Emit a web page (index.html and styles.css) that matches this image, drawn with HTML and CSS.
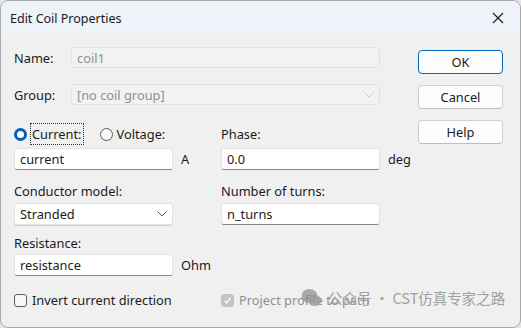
FILE: index.html
```html
<!DOCTYPE html>
<html>
<head>
    <meta charset="utf-8">
    <title>Edit Coil Properties</title>
    <link rel="stylesheet" href="styles.css">
</head>
<body>
    <div class="window">
        <div class="titlebar">
            <span class="title">Edit Coil Properties</span>
            <svg class="close" width="12" height="12" viewBox="0 0 12 12">
                <path d="M1 1 L11 11 M11 1 L1 11" stroke="#1a1a1a" stroke-width="1.1" fill="none"/>
            </svg>
        </div>

        <div class="content">
            <div class="form">
                <div class="row-wide row-name">
                    <span class="label">Name:</span>
                    <div class="field disabled">coil1</div>
                </div>
                <div class="row-wide row-group">
                    <span class="label">Group:</span>
                    <div class="field disabled combo">
                        [no coil group]
                        <svg class="chev" width="10" height="6" viewBox="0 0 10 6"><path d="M0.5 0.5 L5 5 L9.5 0.5" stroke="#c8c8c8" fill="none"/></svg>
                    </div>
                </div>

                <div class="row row-radio">
                    <div class="radios">
                        <span class="radio on"></span>
                        <span class="focus">Current:</span>
                        <span class="radio"></span>
                        <span>Voltage:</span>
                    </div>
                    <span></span>
                    <span>Phase:</span>
                </div>
                <div class="row row-input">
                    <div class="field">current</div>
                    <span class="unit">A</span>
                    <div class="field">0.0</div>
                    <span class="unit">deg</span>
                </div>

                <div class="row row-label">
                    <span>Conductor model:</span>
                    <span></span>
                    <span>Number of turns:</span>
                </div>
                <div class="row row-input2">
                    <div class="field combo plain">
                        Stranded
                        <svg class="chev" width="10" height="6" viewBox="0 0 10 6"><path d="M0.5 0.5 L5 5 L9.5 0.5" stroke="#5a5a5a" fill="none"/></svg>
                    </div>
                    <span></span>
                    <div class="field">n_turns</div>
                </div>

                <div class="row row-label2">
                    <span>Resistance:</span>
                </div>
                <div class="row row-input3">
                    <div class="field">resistance</div>
                    <span class="unit">Ohm</span>
                </div>

                <div class="row row-check">
                    <div class="check-item">
                        <span class="checkbox"></span>
                        <span>Invert current direction</span>
                    </div>
                    <span></span>
                    <div class="check-item grey">
                        <span class="checkbox checked">
                            <svg width="9" height="9" viewBox="0 0 9 9"><path d="M1.5 4.8 L3.6 6.8 L7.6 2" stroke="#fff" stroke-width="1.3" fill="none"/></svg>
                        </span>
                        <span>Project profile to path</span>
                    </div>
                </div>
            </div>

            <div class="buttons">
                <div class="btn default">OK</div>
                <div class="btn">Cancel</div>
                <div class="btn">Help</div>
            </div>
        </div>

        <div class="watermark">
            <svg width="22" height="20" viewBox="0 0 22 20">
                <ellipse cx="8.5" cy="8" rx="8" ry="7" fill="#8e8e8e" opacity="0.75"/>
                <ellipse cx="14" cy="12.5" rx="6.5" ry="5.5" fill="#9a9a9a" opacity="0.75"/>
            </svg>
            <span>公众号 · CST仿真专家之路</span>
        </div>
    </div>
</body>
</html>
```

FILE: styles.css
```css
html {
    background: #e6e6e6;
}

body {
    margin: 0;
    font-family: "Noto Sans", "Liberation Sans", sans-serif;
    font-size: 12.8px;
    color: #1b1b1b;
}

.window {
    position: relative;
    width: 519px;
    height: 326px;
    border: 1px solid #a9a9a9;
    border-radius: 8px;
    background: #f0f0f0;
    overflow: hidden;
}

.titlebar {
    height: 34px;
    background: #eef2f9;
    display: flex;
    align-items: center;
    justify-content: space-between;
    padding: 0 16px 0 9px;
}

.title {
    font-size: 12.5px;
}

.content {
    display: flex;
    padding-left: 13px;
}

.form {
    width: 366px;
}

.row-wide {
    display: grid;
    grid-template-columns: 57px 309px;
    align-items: center;
    height: 21px;
}

.row-name {
    margin-top: 12px;
}

.row-group {
    margin-top: 16px;
}

.row {
    display: grid;
    grid-template-columns: 159px 48px 159px 40px;
    align-items: center;
}

.row-radio {
    margin-top: 19px;
    height: 20px;
}

.row-input {
    margin-top: 4px;
    height: 22px;
}

.row-label {
    margin-top: 12px;
    height: 16px;
}

.row-input2 {
    margin-top: 5px;
    height: 22px;
}

.row-label2 {
    margin-top: 9px;
    height: 16px;
}

.row-input3 {
    margin-top: 4px;
    height: 22px;
}

.row-check {
    margin-top: 15px;
    height: 16px;
}

.field {
    box-sizing: border-box;
    height: 22px;
    background: #fff;
    border: 1px solid #e3e3e3;
    border-bottom-color: #868686;
    border-radius: 3px;
    padding: 0 5px;
    display: flex;
    align-items: center;
    justify-content: space-between;
}

.field.disabled {
    height: 21px;
    background: #f2f2f2;
    border-color: #e2e2e2;
    color: #8f8f8f;
}

.combo.plain {
    border-bottom-color: #e3e3e3;
    box-shadow: 0 1px 0 #d0d0d0;
}

.chev {
    margin-right: 0;
}

.unit {
    padding-left: 8px;
}

.radios {
    display: flex;
    align-items: center;
}

.radio {
    box-sizing: border-box;
    width: 13px;
    height: 13px;
    border-radius: 50%;
    border: 1px solid #5d5d5d;
    background: #f7f7f7;
    margin-right: 4px;
}

.radio.on {
    border: 3.5px solid #005fb8;
    background: #fff;
}

.focus {
    outline: 1px dotted #333;
    outline-offset: 0;
    padding: 1px 1px;
    margin-right: 17px;
}

.check-item {
    display: flex;
    align-items: center;
    white-space: nowrap;
}

.checkbox {
    box-sizing: border-box;
    width: 13px;
    height: 13px;
    border: 1px solid #5d5d5d;
    border-radius: 3px;
    background: #f7f7f7;
    margin-right: 5px;
    display: flex;
    align-items: center;
    justify-content: center;
}

.checkbox.checked {
    border-color: #c4c4c4;
    background: #c4c4c4;
}

.grey {
    color: #8f8f8f;
}

.buttons {
    margin-left: 38px;
    padding-top: 15px;
    display: flex;
    flex-direction: column;
    gap: 11px;
}

.btn {
    box-sizing: border-box;
    width: 85px;
    height: 24px;
    background: #fdfdfd;
    border: 1px solid #d0d0d0;
    border-bottom-color: #bdbdbd;
    border-radius: 4px;
    display: flex;
    align-items: center;
    justify-content: center;
}

.btn.default {
    border: 1px solid #0067c0;
}

.watermark {
    position: absolute;
    left: 300px;
    top: 286px;
    display: flex;
    align-items: center;
    gap: 5px;
    font-family: "Noto Sans CJK SC", "Noto Sans", sans-serif;
    font-size: 14.5px;
    color: #9c9c9c;
    opacity: 0.95;
}
```
